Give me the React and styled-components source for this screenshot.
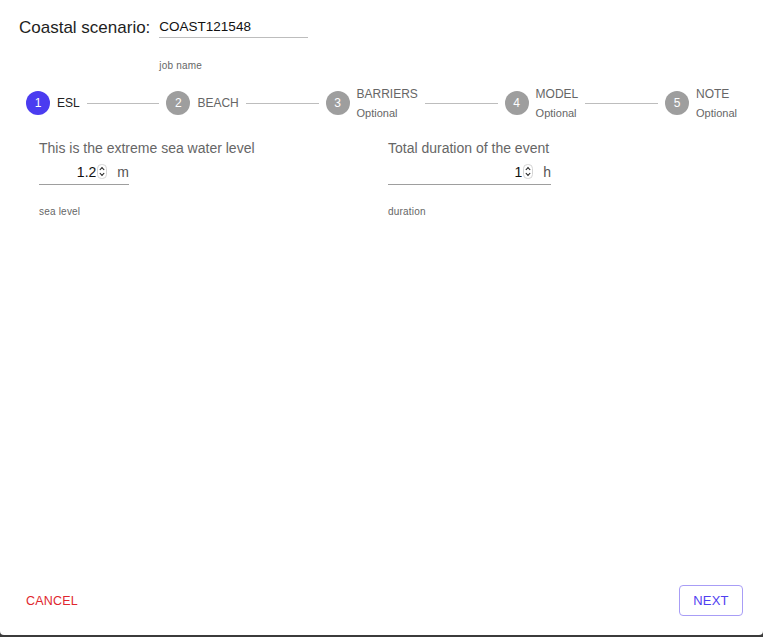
import React from 'react'
import styled, { createGlobalStyle } from 'styled-components'

const GlobalStyle = createGlobalStyle`
  html, body {
    margin: 0;
    padding: 0;
    background: #3b3b3b;
  }
  body {
    font-family: "Liberation Sans", Arial, sans-serif;
  }
  * { box-sizing: border-box; }
`

const Dialog = styled.div`
  width: 763px;
  height: 635px;
  background: #fff;
  border-radius: 0 0 4px 4px;
  display: flex;
  flex-direction: column;
`

const Header = styled.div`
  display: flex;
  align-items: flex-start;
  gap: 9px;
  padding: 18px 19px 0 19px;
`

const Title = styled.h2`
  margin: 0;
  font-size: 17px;
  font-weight: 400;
  line-height: 20px;
  color: #1e1e1e;
  white-space: nowrap;
`

const Field = styled.div`
  display: flex;
  flex-direction: column;
  width: ${p => p.width}px;
`

const Label = styled.div`
  font-size: 14px;
  line-height: 16px;
  color: #666;
  margin-bottom: 6px;
  white-space: nowrap;
`

const InputRow = styled.div`
  display: flex;
  align-items: center;
  height: ${p => (p.light ? 20 : 23)}px;
  padding-bottom: 3px;
  border-bottom: 1px solid ${p => (p.light ? '#bdbdbd' : '#9e9e9e')};
`

const TextInput = styled.input`
  flex: 1;
  min-width: 0;
  border: none;
  outline: none;
  padding: 0;
  background: transparent;
  font-family: inherit;
  font-size: ${p => p.size || 14}px;
  color: #111;
  text-align: ${p => p.align || 'left'};
`

const Spinner = styled.svg`
  flex: none;
  margin-left: 1px;
`

const Unit = styled.span`
  margin-left: 10px;
  font-size: 14px;
  color: #555;
`

const Helper = styled.div`
  font-size: 10px;
  line-height: 12px;
  color: #666;
  margin-top: ${p => p.top || 22}px;
  letter-spacing: 0.2px;
`

const Stepper = styled.div`
  display: flex;
  align-items: center;
  padding: 0 19px;
  margin-top: 16px;
  height: 30px;
`

const Step = styled.div`
  display: flex;
  align-items: center;
  padding: 0 7px;
`

const Circle = styled.div`
  width: 24px;
  height: 24px;
  border-radius: 50%;
  background: ${p => (p.active ? '#4b3cf0' : '#9e9e9e')};
  color: #fff;
  font-size: 12px;
  display: flex;
  align-items: center;
  justify-content: center;
  flex: none;
`

const StepText = styled.div`
  display: flex;
  flex-direction: column;
  padding-left: 7px;
`

const StepName = styled.span`
  font-size: 12px;
  line-height: 14px;
  color: ${p => (p.active ? '#222' : '#666')};
`

const Optional = styled.span`
  font-size: 11px;
  line-height: 12px;
  margin-top: 6px;
  color: #666;
`

const Connector = styled.div`
  flex: 1;
  border-top: 1px solid #bdbdbd;
`

const Content = styled.div`
  display: grid;
  grid-template-columns: 349px 1fr;
  padding: 0 0 0 39px;
  margin-top: 22px;
`

const Footer = styled.div`
  margin-top: auto;
  display: flex;
  align-items: center;
  justify-content: space-between;
  padding: 0 20px 19px 18px;
`

const TextButton = styled.button`
  border: none;
  background: none;
  padding: 6px 8px;
  font-family: inherit;
  font-size: 12.5px;
  color: #e0262e;
  letter-spacing: 0.2px;
`

const OutlinedButton = styled.button`
  width: 64px;
  height: 31px;
  border: 1px solid #a89df6;
  border-radius: 4px;
  background: #fff;
  font-family: inherit;
  font-size: 13px;
  color: #5040f0;
  letter-spacing: 0.2px;
`

const SpinIcon = () => (
  <Spinner width="10" height="15" viewBox="0 0 10 15">
    <rect x="0.5" y="0.5" width="9" height="14" rx="4" fill="#fff" stroke="#d4d4d4" />
    <path d="M2.8 6 L5 3.6 L7.2 6" fill="none" stroke="#222" strokeWidth="1.1" />
    <path d="M2.8 9 L5 11.4 L7.2 9" fill="none" stroke="#222" strokeWidth="1.1" />
  </Spinner>
)

const steps = [
  { n: 1, name: 'ESL', active: true },
  { n: 2, name: 'BEACH' },
  { n: 3, name: 'BARRIERS', optional: true },
  { n: 4, name: 'MODEL', optional: true },
  { n: 5, name: 'NOTE', optional: true },
]

const NumberField = ({ label, value, unit, width, helper }) => (
  <Field width={width}>
    <Label>{label}</Label>
    <InputRow>
      <TextInput defaultValue={value} align="right" />
      <SpinIcon />
      <Unit>{unit}</Unit>
    </InputRow>
    <Helper top={21}>{helper}</Helper>
  </Field>
)

const App = () => {
  return (
    <>
      <GlobalStyle />
      <Dialog>
        <Header>
          <Title>Coastal scenario:</Title>
          <Field width={149}>
            <InputRow light>
              <TextInput defaultValue="COAST121548" size={13.5} />
            </InputRow>
            <Helper>job name</Helper>
          </Field>
        </Header>
        <Stepper>
          {steps.map((s, i) => (
            <React.Fragment key={s.n}>
              {i > 0 && <Connector />}
              <Step>
                <Circle active={s.active}>{s.n}</Circle>
                <StepText>
                  <StepName active={s.active}>{s.name}</StepName>
                  {s.optional && <Optional>Optional</Optional>}
                </StepText>
              </Step>
            </React.Fragment>
          ))}
        </Stepper>
        <Content>
          <NumberField label="This is the extreme sea water level" value="1.2" unit="m" width={90} helper="sea level" />
          <NumberField label="Total duration of the event" value="1" unit="h" width={163} helper="duration" />
        </Content>
        <Footer>
          <TextButton>CANCEL</TextButton>
          <OutlinedButton>NEXT</OutlinedButton>
        </Footer>
      </Dialog>
    </>
  )
}

export default App
